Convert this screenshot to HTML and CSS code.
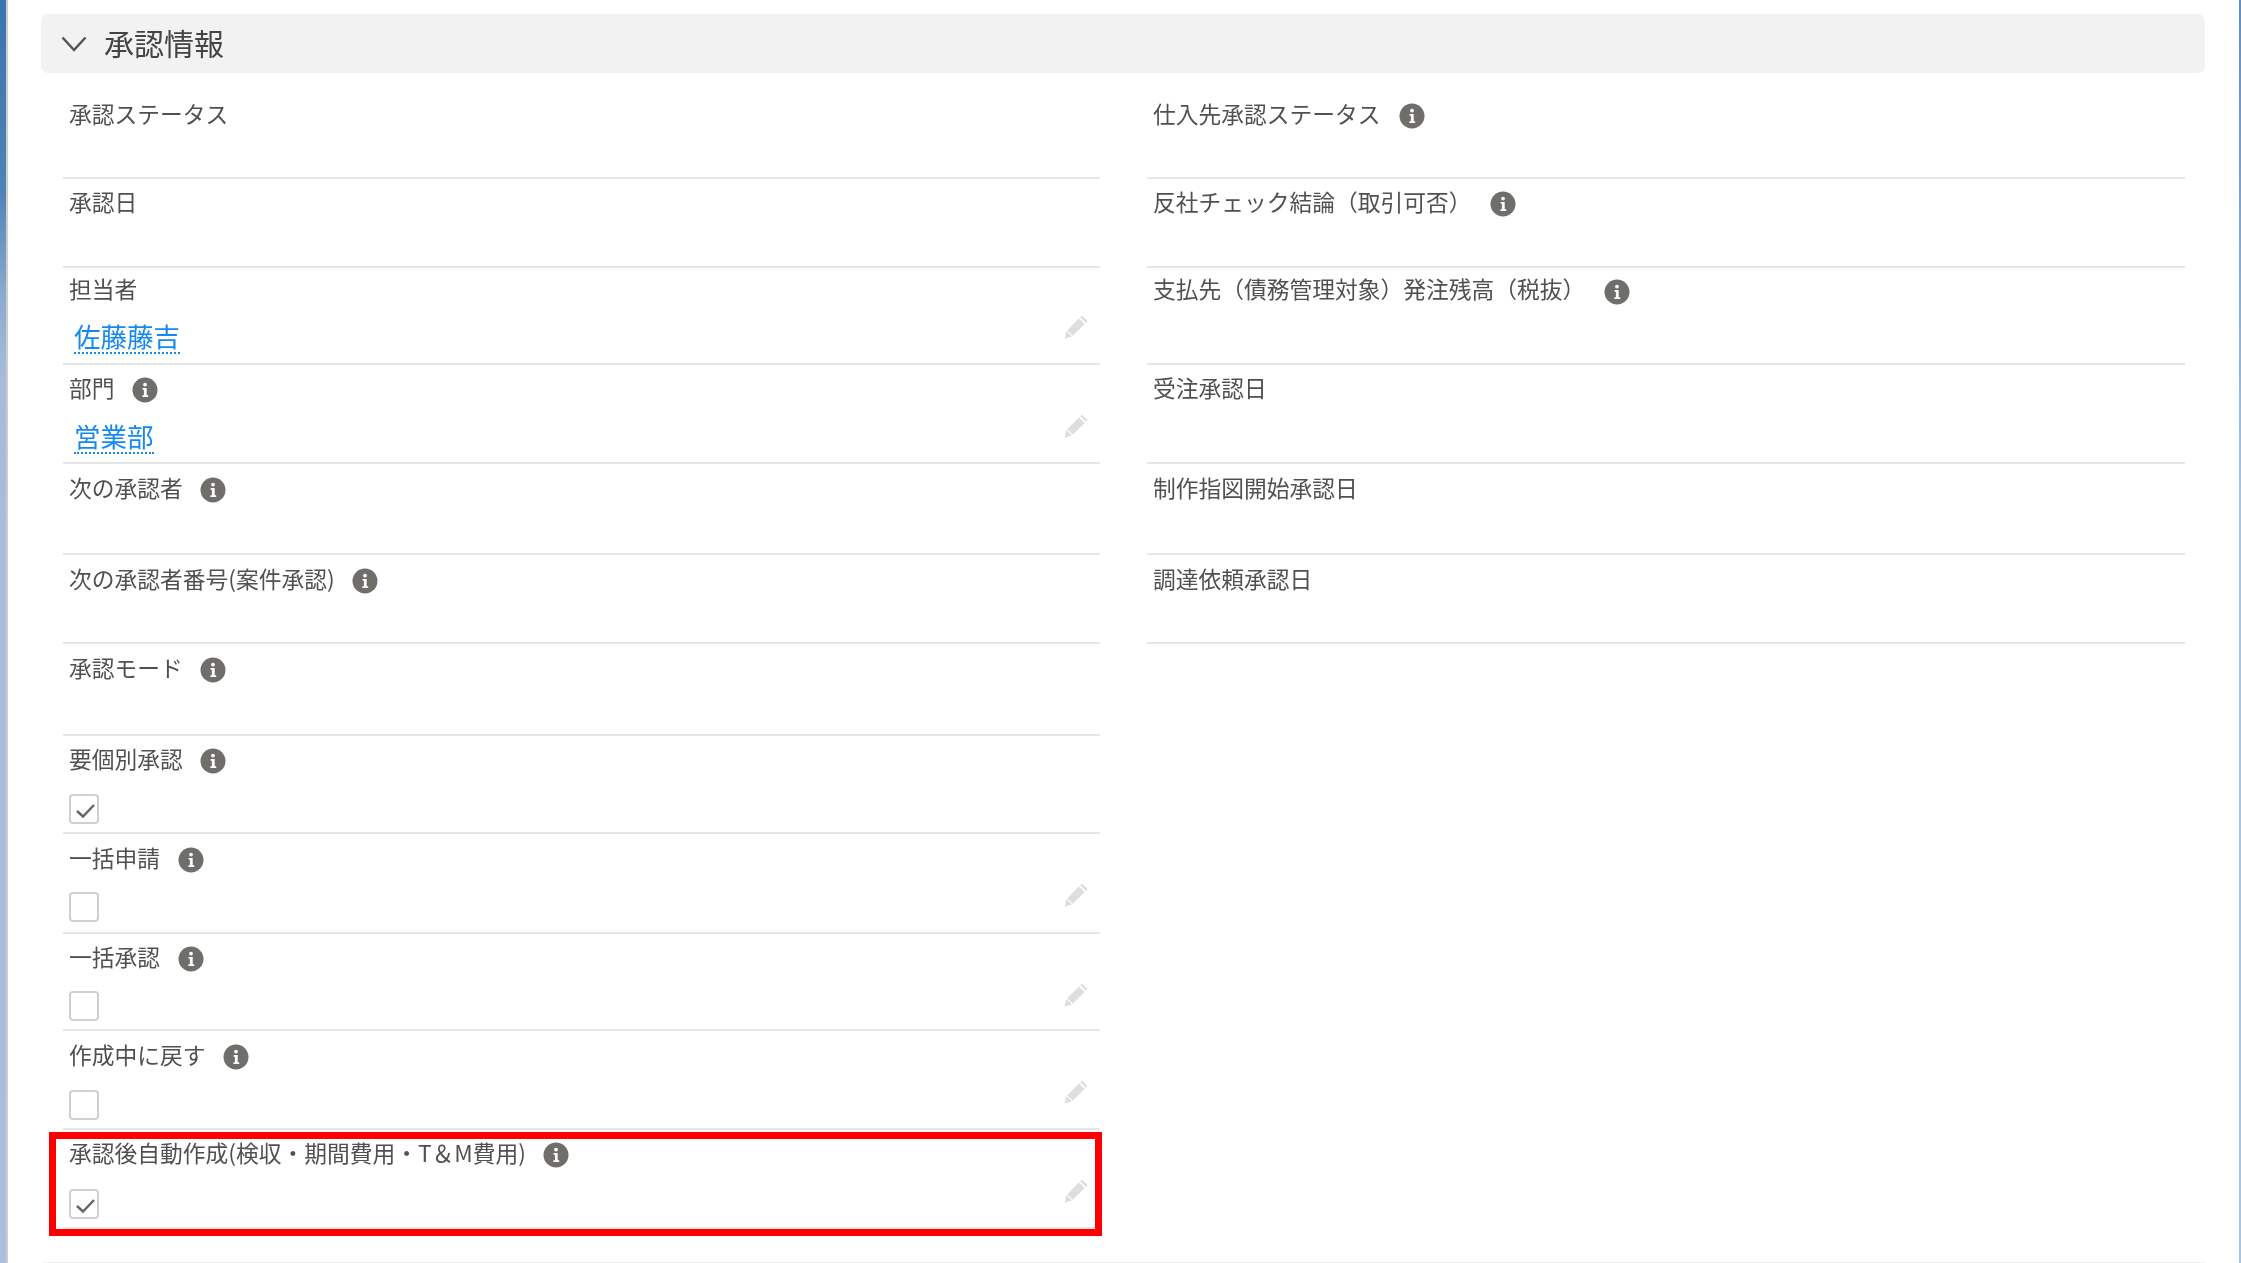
FILE: index.html
```html
<!DOCTYPE html>
<html lang="ja">
<head>
<meta charset="utf-8">
<title>承認情報</title>
<link rel="stylesheet" href="styles.css">
</head>
<body>
<svg class="defs" width="0" height="0" aria-hidden="true">
  <symbol id="info" viewBox="0 0 26 26">
    <circle cx="13" cy="13" r="12.5" fill="#706e6b"/>
    <circle cx="13" cy="7.6" r="1.9" fill="#fff"/>
    <path d="M10.6 11h4.1v7.2h1.5v1.8H10.4v-1.8h1.500v-5.400h-1.300z" fill="#fff"/>
  </symbol>
  <symbol id="pencil" viewBox="0 0 24 24">
    <path d="M0.5 23.500l1.900-7.400 5.500 5.500zM3.200 15.200L15 3.400l5.600 5.600L8.800 20.800zM16.200 2.200L17.900 0.500l5.600 5.600-1.700 1.700z" fill="#dfdedd"/>
  </symbol>
  <symbol id="check" viewBox="0 0 26 26">
    <path d="M6 15l6 5.500L23 9" fill="none" stroke="#666" stroke-width="2.500"/>
  </symbol>
</svg>
<div class="strip strip-left"></div>
<main class="main">
  <header class="section-head">
    <svg class="chevron" viewBox="0 0 26 16"><path d="M1.500 1.500L13 14 24.500 1.500" fill="none" stroke="#555" stroke-width="2.500"/></svg>
    <h2 class="section-title">承認情報</h2>
  </header>
  <section class="fields">
    <div class="field lo"><div class="label">承認ステータス</div></div>
    <div class="field"><div class="label">承認日</div></div>
    <div class="field up2"><div class="label">担当者</div>
      <div class="value"><a class="link">佐藤藤吉</a><svg class="pencil"><use href="#pencil"/></svg></div></div>
    <div class="field"><div class="label">部門<svg class="info"><use href="#info"/></svg></div>
      <div class="value"><a class="link">営業部</a><svg class="pencil"><use href="#pencil"/></svg></div></div>
    <div class="field lo"><div class="label">次の承認者<svg class="info"><use href="#info"/></svg></div></div>
    <div class="field lo"><div class="label">次の承認者番号(案件承認)<svg class="info"><use href="#info"/></svg></div></div>
    <div class="field lo"><div class="label">承認モード<svg class="info"><use href="#info"/></svg></div></div>
    <div class="field"><div class="label">要個別承認<svg class="info"><use href="#info"/></svg></div>
      <div class="value"><span class="checkbox"><svg class="tick"><use href="#check"/></svg></span></div></div>
    <div class="field lo"><div class="label">一括申請<svg class="info"><use href="#info"/></svg></div>
      <div class="value"><span class="checkbox"></span><svg class="pencil"><use href="#pencil"/></svg></div></div>
    <div class="field"><div class="label">一括承認<svg class="info"><use href="#info"/></svg></div>
      <div class="value"><span class="checkbox"></span><svg class="pencil"><use href="#pencil"/></svg></div></div>
    <div class="field lo"><div class="label">作成中に戻す<svg class="info"><use href="#info"/></svg></div>
      <div class="value"><span class="checkbox"></span><svg class="pencil"><use href="#pencil"/></svg></div></div>
    <div class="field highlighted"><div class="label">承認後自動作成(検収・期間費用・T＆M費用)<svg class="info"><use href="#info"/></svg></div>
      <div class="value"><span class="checkbox"><svg class="tick"><use href="#check"/></svg></span><svg class="pencil"><use href="#pencil"/></svg></div></div>

    <div class="field lo"><div class="label">仕入先承認ステータス<svg class="info"><use href="#info"/></svg></div></div>
    <div class="field"><div class="label">反社チェック結論（取引可否）<svg class="info"><use href="#info"/></svg></div></div>
    <div class="field up2"><div class="label">支払先（債務管理対象）発注残高（税抜）<svg class="info"><use href="#info"/></svg></div></div>
    <div class="field"><div class="label">受注承認日</div></div>
    <div class="field lo"><div class="label">制作指図開始承認日</div></div>
    <div class="field lo"><div class="label">調達依頼承認日</div></div>
  </section>
  <div class="bottom-rule"></div>
</main>
<div class="strip strip-right"></div>
</body>
</html>
```
FILE: styles.css
```css
* { box-sizing: border-box; }
html, body { margin: 0; height: 100%; }
body {
  display: flex;
  height: 1263px;
  overflow: hidden;
  background: #fff;
  font-family: "Noto Sans CJK JP", "Noto Sans", sans-serif;
  color: #545454;
}
.defs { position: absolute; }
.strip { flex: none; }
.strip-left {
  width: 8px;
  border-right: 2px solid #cdcdcd;
  background: linear-gradient(#3b74ad 0, #4f82b5 15%, #8fadd0 24%, #a6bcd9 30%, #a9bfdc 100%);
}
.strip-right {
  width: 2px;
  margin-left: auto;
  background: linear-gradient(#5f8fc4 0, #a9c3e2 40%);
}
.main {
  flex: none;
  width: 2231px;
  padding: 14px 0 0 33px;
  display: flex;
  flex-direction: column;
}
.section-head {
  width: 2164px;
  height: 59px;
  flex: none;
  display: flex;
  align-items: center;
  padding-left: 20px;
  background: #f2f2f2;
  border-radius: 7px;
}
.chevron { width: 26px; height: 16px; flex: none; filter: blur(0.5px); }
.section-title {
  margin: -3px 0 0 17px;
  font-size: 30px;
  font-weight: 400;
  line-height: 40px;
  color: #444;
  filter: blur(0.5px);
}
.fields {
  margin: 17px 0 0 22px;
  width: 2122px;
  flex: none;
  display: grid;
  grid-template-columns: 1037px 1038px;
  grid-template-rows: 89px 89px 97px 99px 91px 89px 92px 98px 100px 97px 99px 99px;
  grid-auto-flow: column;
  column-gap: 47px;
}
.field {
  position: relative;
  padding: 9px 12px 0 6px;
  border-bottom: 2px solid #e6e6e6;
}
.field.up2 { padding-top: 7px; }
.field.lo { padding-top: 10px; }
.label {
  display: flex;
  align-items: center;
  height: 28px;
  font-size: 22.75px;
  line-height: 28px;
  white-space: nowrap;
  color: #505050;
  filter: blur(0.5px);
}
.info { width: 26px; height: 26px; margin: 4px 0 0 17.5px; flex: none; }
.up2 .info { margin-top: 6px; }
.field:nth-child(n+13) .info { margin-left: 18.5px; }
.value {
  display: flex;
  justify-content: space-between;
  align-items: flex-start;
  margin-top: 12px;
}
.lo .value { margin-top: 11px; }
.link {
  display: inline-block;
  margin: 6px 0 0 5px;
  font-size: 26.5px;
  line-height: 32px;
  color: #1589ee;
  border-bottom: 2px dotted #1589ee;
  filter: blur(0.4px);
}
.up2 .link { margin-top: 5px; }
.checkbox {
  display: block;
  width: 30px;
  height: 30px;
  margin-top: 9px;
  border: 2px solid #d0d0d0;
  border-radius: 4px;
  background: #fff;
  filter: blur(0.4px);
}
.field:nth-child(10) .checkbox { margin-top: 8px; }
.field:nth-child(11) .checkbox { margin-top: 10px; }
.field:nth-child(12) .checkbox { margin-top: 10px; }
.tick { display: block; width: 26px; height: 26px; }
.pencil { width: 24px; height: 24px; flex: none; margin-left: auto; filter: blur(0.4px); }
.highlighted::after {
  content: "";
  position: absolute;
  top: 2px;
  left: -14px;
  right: -2px;
  bottom: -9px;
  border: 7px solid #ff0000;
  pointer-events: none;
}
.bottom-rule {
  margin: 33px 0 0 2px;
  width: 2162px;
  height: 1px;
  background: #ececec;
  flex: none;
}
```
